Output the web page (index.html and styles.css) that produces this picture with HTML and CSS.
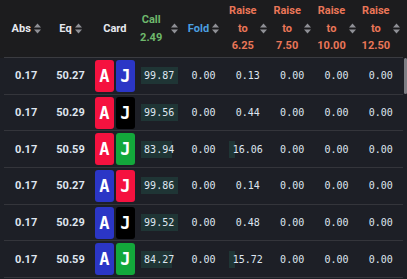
FILE: index.html
```html
<!DOCTYPE html>
<html>
<head>
<meta charset="utf-8">
<link rel="stylesheet" href="styles.css">
</head>
<body>
<div class="wrap">
  <div class="head">
    <div class="hc"><span class="lbl">Abs</span><svg class="sort" viewBox="0 0 7 11"><path d="M0 4.5L3.5 0.5L7 4.5Z M0 6.5L7 6.5L3.5 10.5Z"/></svg></div>
    <div class="hc"><span class="lbl">Eq</span><svg class="sort" viewBox="0 0 7 11"><path d="M0 4.5L3.5 0.5L7 4.5Z M0 6.5L7 6.5L3.5 10.5Z"/></svg></div>
    <div class="hc"><span class="lbl">Card</span></div>
    <div class="hc"><span class="lbl call wide">Call<br>2.49</span><svg class="sort" viewBox="0 0 7 11"><path d="M0 4.5L3.5 0.5L7 4.5Z M0 6.5L7 6.5L3.5 10.5Z"/></svg></div>
    <div class="hc"><span class="lbl fold">Fold</span><svg class="sort" viewBox="0 0 7 11"><path d="M0 4.5L3.5 0.5L7 4.5Z M0 6.5L7 6.5L3.5 10.5Z"/></svg></div>
    <div class="hc"><span class="lbl raise">Raise<br>to<br>6.25</span><svg class="sort" viewBox="0 0 7 11"><path d="M0 4.5L3.5 0.5L7 4.5Z M0 6.5L7 6.5L3.5 10.5Z"/></svg></div>
    <div class="hc"><span class="lbl raise">Raise<br>to<br>7.50</span><svg class="sort" viewBox="0 0 7 11"><path d="M0 4.5L3.5 0.5L7 4.5Z M0 6.5L7 6.5L3.5 10.5Z"/></svg></div>
    <div class="hc"><span class="lbl raise">Raise<br>to<br>10.00</span><svg class="sort" viewBox="0 0 7 11"><path d="M0 4.5L3.5 0.5L7 4.5Z M0 6.5L7 6.5L3.5 10.5Z"/></svg></div>
    <div class="hc"><span class="lbl raise">Raise<br>to<br>12.50</span><svg class="sort" viewBox="0 0 7 11"><path d="M0 4.5L3.5 0.5L7 4.5Z M0 6.5L7 6.5L3.5 10.5Z"/></svg></div>
  </div>

  <div class="row">
    <div class="c num">0.17</div><div class="c num">50.27</div>
    <div class="c cards"><span class="k red">A</span><span class="k blue">J</span></div>
    <div class="c"><span class="box" style="--p:99.87%">99.87</span></div>
    <div class="c"><span class="box" style="--p:0%">0.00</span></div>
    <div class="c"><span class="box" style="--p:0.13%">0.13</span></div>
    <div class="c"><span class="box" style="--p:0%">0.00</span></div>
    <div class="c"><span class="box" style="--p:0%">0.00</span></div>
    <div class="c"><span class="box" style="--p:0%">0.00</span></div>
  </div>
  <div class="row">
    <div class="c num">0.17</div><div class="c num">50.29</div>
    <div class="c cards"><span class="k red">A</span><span class="k black">J</span></div>
    <div class="c"><span class="box" style="--p:99.56%">99.56</span></div>
    <div class="c"><span class="box" style="--p:0%">0.00</span></div>
    <div class="c"><span class="box" style="--p:0.44%">0.44</span></div>
    <div class="c"><span class="box" style="--p:0%">0.00</span></div>
    <div class="c"><span class="box" style="--p:0%">0.00</span></div>
    <div class="c"><span class="box" style="--p:0%">0.00</span></div>
  </div>
  <div class="row">
    <div class="c num">0.17</div><div class="c num">50.59</div>
    <div class="c cards"><span class="k red">A</span><span class="k green">J</span></div>
    <div class="c"><span class="box" style="--p:83.94%">83.94</span></div>
    <div class="c"><span class="box" style="--p:0%">0.00</span></div>
    <div class="c"><span class="box" style="--p:16.06%">16.06</span></div>
    <div class="c"><span class="box" style="--p:0%">0.00</span></div>
    <div class="c"><span class="box" style="--p:0%">0.00</span></div>
    <div class="c"><span class="box" style="--p:0%">0.00</span></div>
  </div>
  <div class="row">
    <div class="c num">0.17</div><div class="c num">50.27</div>
    <div class="c cards"><span class="k blue">A</span><span class="k red">J</span></div>
    <div class="c"><span class="box" style="--p:99.86%">99.86</span></div>
    <div class="c"><span class="box" style="--p:0%">0.00</span></div>
    <div class="c"><span class="box" style="--p:0.14%">0.14</span></div>
    <div class="c"><span class="box" style="--p:0%">0.00</span></div>
    <div class="c"><span class="box" style="--p:0%">0.00</span></div>
    <div class="c"><span class="box" style="--p:0%">0.00</span></div>
  </div>
  <div class="row">
    <div class="c num">0.17</div><div class="c num">50.29</div>
    <div class="c cards"><span class="k blue">A</span><span class="k black">J</span></div>
    <div class="c"><span class="box" style="--p:99.52%">99.52</span></div>
    <div class="c"><span class="box" style="--p:0%">0.00</span></div>
    <div class="c"><span class="box" style="--p:0.48%">0.48</span></div>
    <div class="c"><span class="box" style="--p:0%">0.00</span></div>
    <div class="c"><span class="box" style="--p:0%">0.00</span></div>
    <div class="c"><span class="box" style="--p:0%">0.00</span></div>
  </div>
  <div class="row">
    <div class="c num">0.17</div><div class="c num">50.59</div>
    <div class="c cards"><span class="k blue">A</span><span class="k green">J</span></div>
    <div class="c"><span class="box" style="--p:84.27%">84.27</span></div>
    <div class="c"><span class="box" style="--p:0%">0.00</span></div>
    <div class="c"><span class="box" style="--p:15.72%">15.72</span></div>
    <div class="c"><span class="box" style="--p:0%">0.00</span></div>
    <div class="c"><span class="box" style="--p:0%">0.00</span></div>
    <div class="c"><span class="box" style="--p:0%">0.00</span></div>
  </div>
  <div class="thumb"></div>
</div>
</body>
</html>
```

FILE: styles.css
```css
* { box-sizing: border-box; }
html, body {
  margin: 0;
  padding: 0;
  background: #1d1f26;
  overflow: hidden;
}
.wrap {
  position: relative;
  width: 407px;
  height: 279px;
  overflow: hidden;
  background: linear-gradient(#1c1c1e 0, #1c1c1e 58px, #1d1f26 58px);
  padding: 0 4px 0 4px;
}
.head {
  display: grid;
  grid-template-columns: repeat(9, 1fr);
  height: 58px;
  border-bottom: 1px solid #3a3b40;
}
.hc {
  display: flex;
  align-items: center;
  justify-content: center;
  gap: 3px;
  font-family: Roboto, "Liberation Sans", sans-serif;
  font-weight: 700;
  font-size: 11px;
  color: #e6e8ee;
}
.lbl {
  text-align: center;
  line-height: 17.5px;
}
.lbl.wide { margin-right: 6px; }
.call { color: #6eb86c; }
.fold { color: #4b9fe0; }
.raise { color: #ea7658; }
.sort {
  width: 7px;
  height: 11px;
  fill: #8f9096;
  flex: none;
}
.row {
  display: grid;
  grid-template-columns: repeat(9, 1fr);
  height: 36.7px;
  border-bottom: 1px solid #34353b;
}
.c {
  display: flex;
  align-items: center;
  justify-content: center;
  color: #dfe5ef;
}
.num {
  font-family: Roboto, "Liberation Sans", sans-serif;
  font-weight: 700;
  font-size: 11px;
}
.cards { gap: 2px; }
.k {
  width: 19px;
  height: 32px;
  border-radius: 3px;
  display: flex;
  align-items: center;
  justify-content: center;
  color: #ffffff;
  font-family: "DejaVu Sans Mono", monospace;
  font-weight: 700;
  font-size: 17px;
}
.red { background: #f5123f; }
.blue { background: #2b36c6; }
.black { background: #000000; }
.green { background: #13a83b; }
.box {
  width: 37px;
  height: 17px;
  display: flex;
  align-items: center;
  justify-content: center;
  font-family: "DejaVu Sans Mono", monospace;
  font-size: 10px;
  color: #dfe6f0;
  background: linear-gradient(to right, #1f3535 var(--p), transparent var(--p));
}
.thumb {
  position: absolute;
  right: 0;
  top: 58px;
  width: 3px;
  height: 36px;
  background: #7d7e84;
  border-radius: 2px;
}
```
